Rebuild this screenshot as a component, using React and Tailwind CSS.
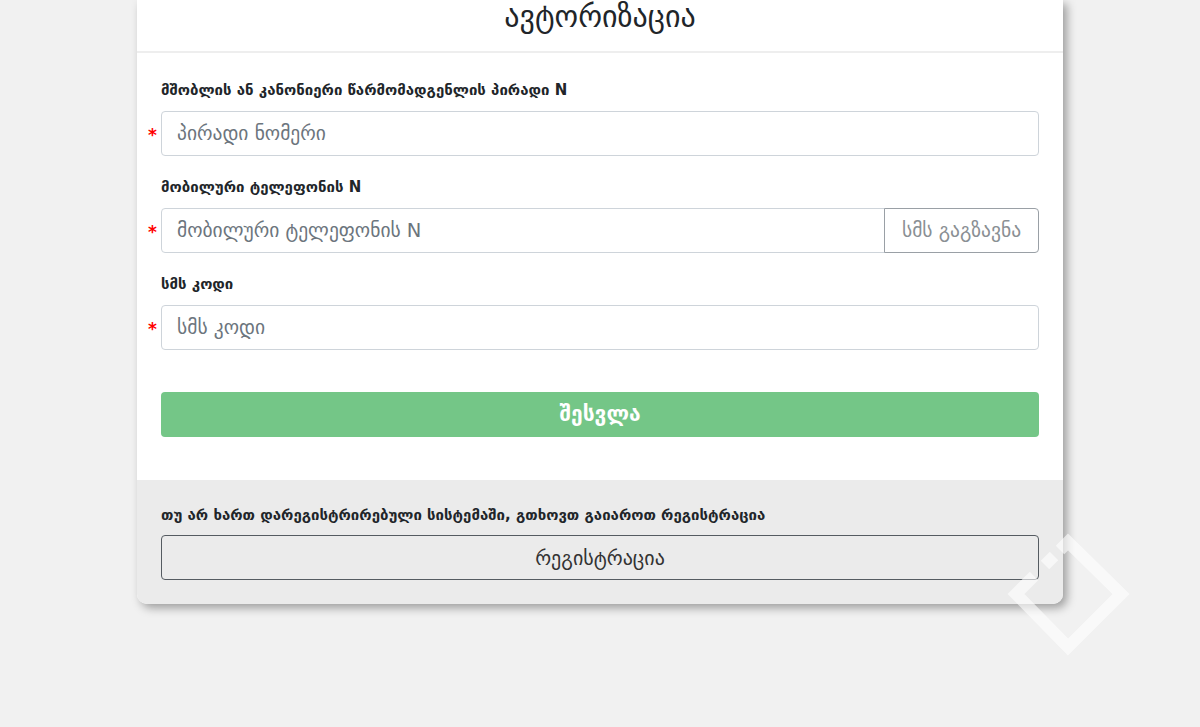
import React from 'react';

const font = { fontFamily: '"DejaVu Sans", "Noto Sans", sans-serif' };

function Field({ label, placeholder, addon }) {
    return (
        <div className="flex flex-col">
            <label className="text-[15px] font-bold text-[#212529] leading-[21px] mb-[10px]">{label}</label>
            <div className="relative flex">
                <span className="absolute -left-[13px] top-[16px] text-[#ff0000] text-[17px] font-bold leading-none">*</span>
                <input
                    placeholder={placeholder}
                    className={`flex-1 min-w-0 h-[45px] px-[15px] text-[19.5px] text-[#495057] placeholder:text-[#6c757d] bg-white border border-[#ced4da] outline-none ${addon ? 'rounded-l-[4px]' : 'rounded-[4px]'}`}
                    style={font}
                />
                {addon && (
                    <button className="h-[45px] w-[155px] border border-[#9aa0a6] -ml-px rounded-r-[4px] text-[19.5px] text-[#8a8f94] bg-white">
                        {addon}
                    </button>
                )}
            </div>
        </div>
    );
}

export default function App() {
    return (
        <div className="min-h-[727px] bg-[#f1f1f1] relative overflow-hidden" style={font}>
            <div className="w-[926px] ml-[137px] bg-white rounded-b-[10px] shadow-[4px_4px_10px_rgba(0,0,0,0.35)]">
                {/* Заголовок */}
                <div className="h-[53px] border-b-2 border-[#eeeeee] flex justify-center">
                    <h2 className="text-[30px] leading-[36px] -mt-[1px] text-[#212529]">ავტორიზაცია</h2>
                </div>

                {/* Форма */}
                <div className="px-[24px] pt-[27px] pb-[43px] flex flex-col gap-[21px]">
                    <Field label="მშობლის ან კანონიერი წარმომადგენლის პირადი N" placeholder="პირადი ნომერი" />
                    <Field label="მობილური ტელეფონის N" placeholder="მობილური ტელეფონის N" addon="სმს გაგზავნა" />
                    <Field label="სმს კოდი" placeholder="სმს კოდი" />
                    <button className="mt-[21px] h-[45px] rounded-[4px] bg-[#74c687] text-white text-[21px] font-semibold">შესვლა</button>
                </div>

                {/* Регистрация */}
                <div className="bg-[#ebebeb] rounded-b-[10px] px-[24px] pt-[25px] pb-[24px] flex flex-col gap-[9px]">
                    <p className="text-[15px] font-bold text-[#212529] leading-[21px]">
                        თუ არ ხართ დარეგისტრირებული სისტემაში, გთხოვთ გაიაროთ რეგისტრაცია
                    </p>
                    <button className="h-[45px] rounded-[4px] border border-[#555b61] text-[20px] text-[#333]">რეგისტრაცია</button>
                </div>
            </div>

            {/* водяной знак */}
            <svg className="absolute left-[1000px] top-[525px] pointer-events-none" width="140" height="140" viewBox="0 0 140 140">
                <g stroke="#ffffff" strokeOpacity="0.6" strokeWidth="12" fill="none" strokeLinejoin="miter">
                    <path d="M60 25 L68 17 L121 69 L68 122 L16 69 L34 51" />
                    <path d="M45 40 L54 31" />
                </g>
            </svg>
        </div>
    );
}
